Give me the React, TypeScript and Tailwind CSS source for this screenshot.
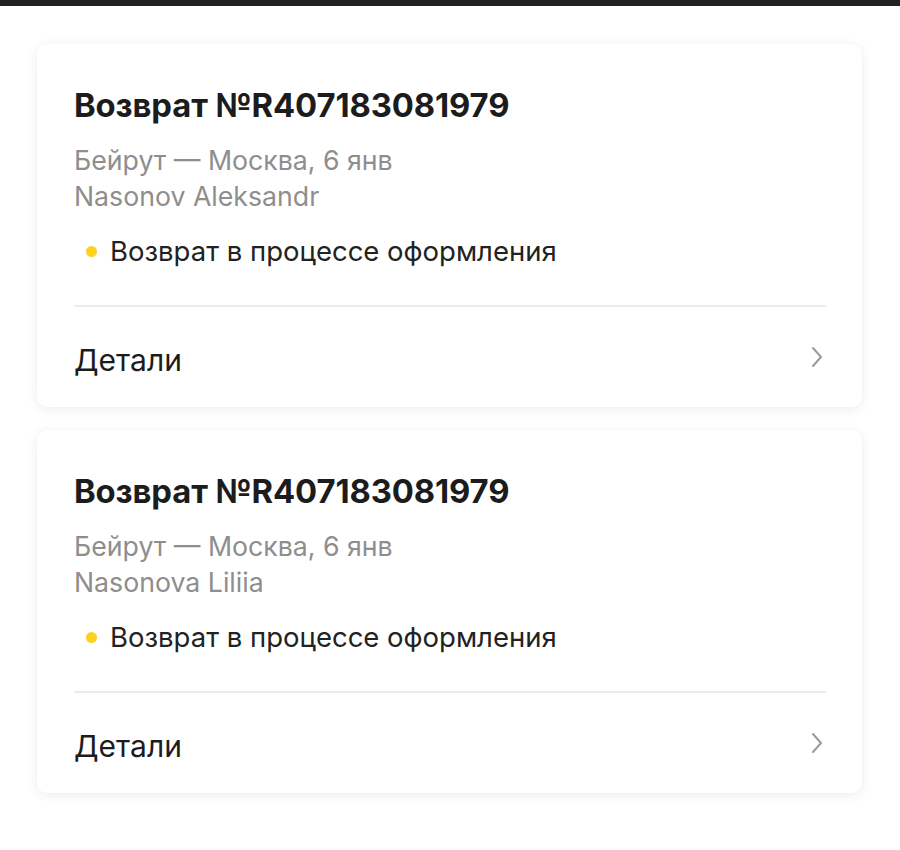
const refunds = [
  { id: 'R407183081979', route: 'Бейрут — Москва, 6 янв', name: 'Nasonov Aleksandr' },
  { id: 'R407183081979', route: 'Бейрут — Москва, 6 янв', name: 'Nasonova Liliia' },
]

function RefundCard({ id, route, name }: { id: string; route: string; name: string }) {
  return (
    <div className="bg-white rounded-[10px] shadow-[0_2px_12px_rgba(0,0,0,0.08)] pl-[37px] pr-[36px]">
      <div className="pt-[44px] text-[32.8px] leading-[34px] font-bold text-[#1c1c1c] tracking-[-0.1px]">
        Возврат №{id}
      </div>
      <div className="mt-[20px] text-[26.7px] leading-[36px] text-[#8e8e8e]">
        <div>{route}</div>
        <div>{name}</div>
      </div>
      <div className="mt-[19px] flex items-center text-[27.5px] leading-[36px] text-[#222]">
        <span className="w-[11px] h-[11px] rounded-full bg-[#fcd21d] ml-[12px] mr-[13px]" />
        Возврат в процессе оформления
      </div>
      <div className="mt-[36px] h-[2px] bg-[#ececec]" />
      <div className="flex items-center justify-between pt-[36px] pb-[30px]">
        <span className="text-[30px] leading-[34px] text-[#1c1c1c]">Детали</span>
        <svg width="14" height="24" viewBox="0 0 14 24" className="mr-[2px] -mt-[6px]">
          <path d="M3 3l8 9-8 9" fill="none" stroke="#9a9a9a" strokeWidth="2" strokeLinecap="round" strokeLinejoin="round" />
        </svg>
      </div>
    </div>
  )
}

export default function App() {
  return (
    <div className="min-h-[850px] bg-white" style={{ fontFamily: 'Inter, "Noto Sans", sans-serif' }}>
      <div className="h-[6px] bg-[#222]" />
      <div className="pt-[38px] pl-[37px] pr-[38px] flex flex-col gap-[23px]">
        {refunds.map((r, i) => (
          <RefundCard key={i} {...r} />
        ))}
      </div>
    </div>
  )
}
